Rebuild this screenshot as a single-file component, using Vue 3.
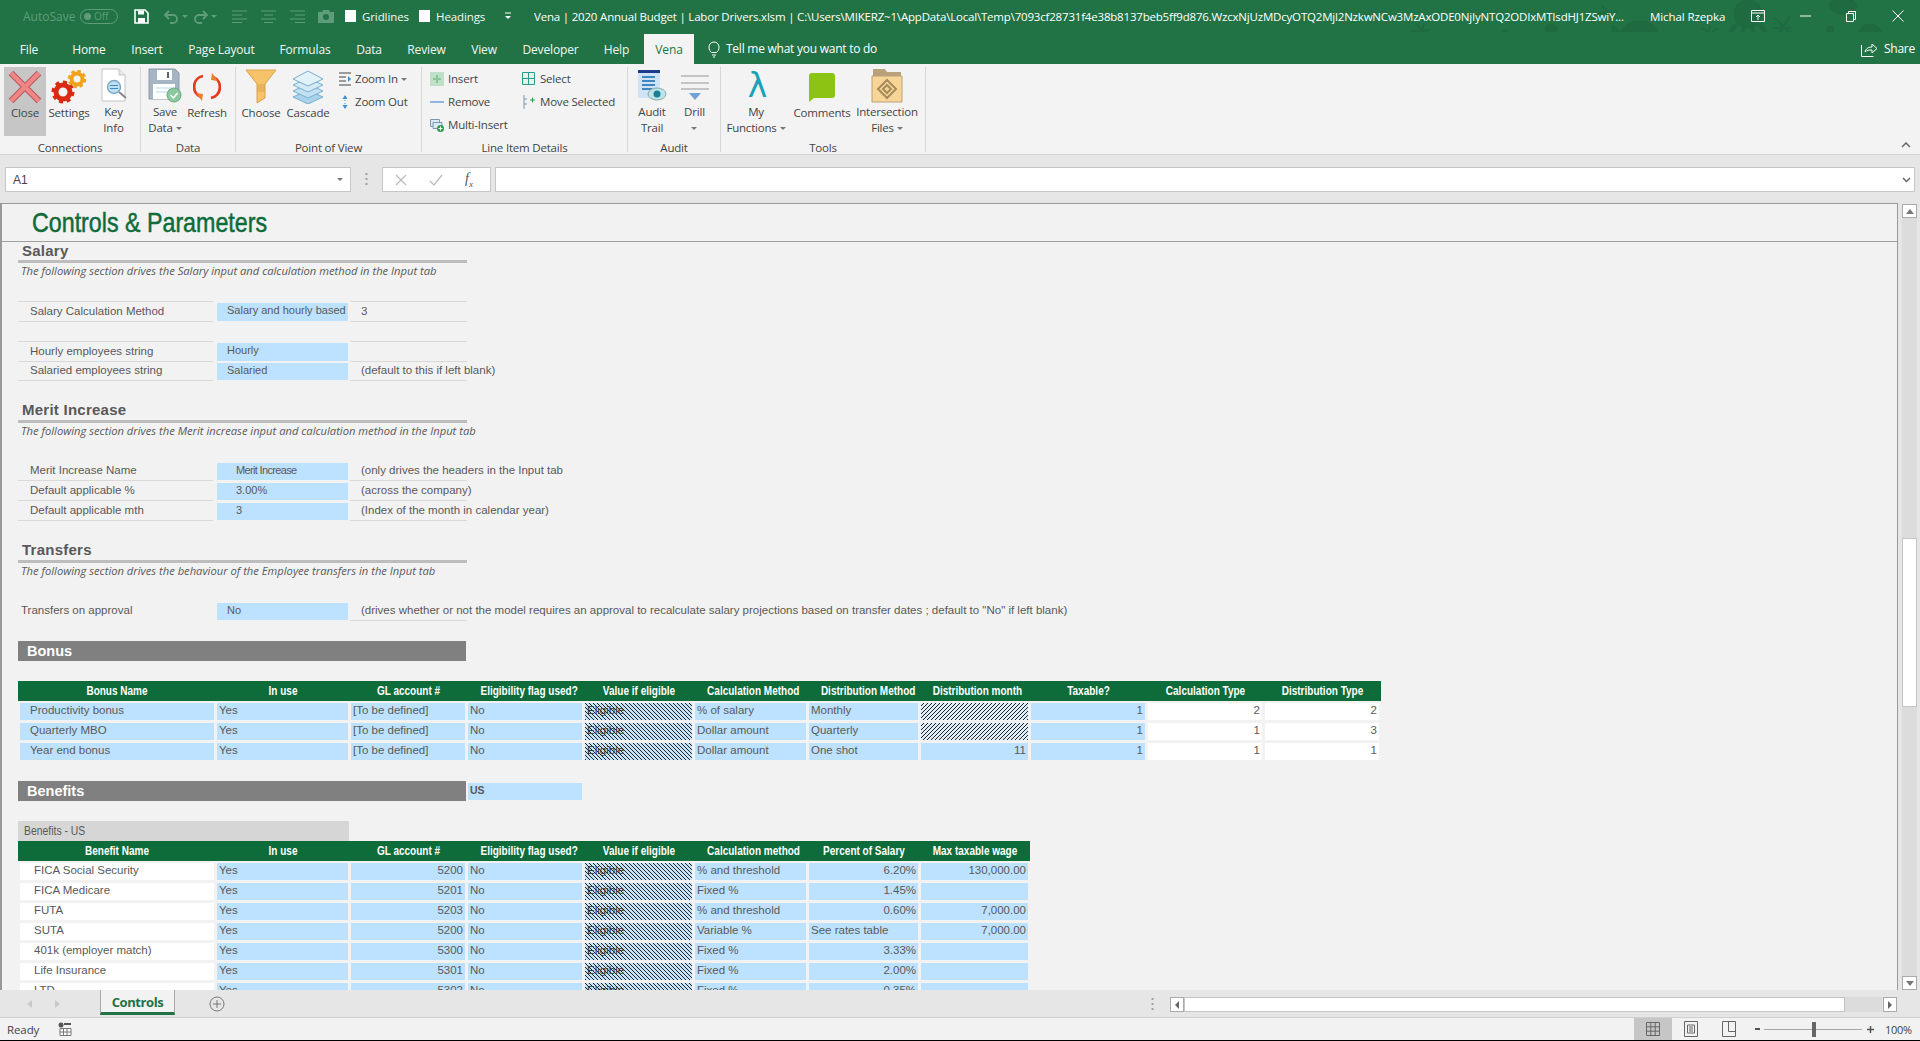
<script setup>
const tabs = [
  { t: 'File', w: 58 }, { t: 'Home', w: 62 }, { t: 'Insert', w: 54 }, { t: 'Page Layout', w: 95 },
  { t: 'Formulas', w: 72 }, { t: 'Data', w: 56 }, { t: 'Review', w: 59 }, { t: 'View', w: 56 },
  { t: 'Developer', w: 77 }, { t: 'Help', w: 55 }
]
const bonus = [
  ['Productivity bonus', 'Yes', '[To be defined]', 'No', 'Eligible', '% of salary', 'Monthly', '', '1', '2', '2'],
  ['Quarterly MBO', 'Yes', '[To be defined]', 'No', 'Eligible', 'Dollar amount', 'Quarterly', '', '1', '1', '3'],
  ['Year end bonus', 'Yes', '[To be defined]', 'No', 'Eligible', 'Dollar amount', 'One shot', '11', '1', '1', '1']
]
const benefits = [
  ['FICA Social Security', '5200', '% and threshold', '6.20%', '130,000.00'],
  ['FICA Medicare', '5201', 'Fixed %', '1.45%', ''],
  ['FUTA', '5203', '% and threshold', '0.60%', '7,000.00'],
  ['SUTA', '5200', 'Variable %', 'See rates table', '7,000.00'],
  ['401k (employer match)', '5300', 'Fixed %', '3.33%', ''],
  ['Life Insurance', '5301', 'Fixed %', '2.00%', ''],
  ['LTD', '5302', 'Fixed %', '0.35%', '']
]
const bonusHead = ['Bonus Name', 'In use', 'GL account #', 'Eligibility flag used?', 'Value if eligible', 'Calculation Method', 'Distribution Method', 'Distribution month', 'Taxable?', 'Calculation Type', 'Distribution Type']
const benefitHead = ['Benefit Name', 'In use', 'GL account #', 'Eligibility flag used?', 'Value if eligible', 'Calculation method', 'Percent of Salary', 'Max taxable wage']
</script>

<template>
  <div class="app">
    <header class="titlebar">
      <svg class="doodles" width="560" height="64" viewBox="0 0 560 64">
        <g fill="#1f6a40" stroke="#1f6a40">
          <ellipse cx="280" cy="32" rx="18" ry="11"/>
          <path d="M262 32l-10-7v14z"/>
          <circle cx="388" cy="14" r="14"/>
          <path d="M376 24l-12 18M384 28l-4 16M392 28l4 16M400 24l12 18" stroke-width="4" fill="none"/>
          <circle cx="191" cy="30" r="6"/>
          <path d="M186 34l-5 10M191 36v8M196 34l5 10" stroke-width="2" fill="none"/>
          <circle cx="510" cy="36" r="12"/>
          <circle cx="470" cy="30" r="4"/>
          <circle cx="145" cy="32" r="3"/>
          <ellipse cx="483" cy="6" rx="14" ry="8"/>
          <path d="M56 24l12 14M64 24l-6 16M50 32l20-2M342 28l18 12M350 26l-3 18M358 28l-16 12M415 18l14 14M430 16l-12 20M412 28l20 0M242 6l12 12M236 14l22-2" stroke-width="2" fill="none"/>
        </g>
      </svg>
      <span class="autosave">AutoSave</span>
      <span class="toggle"><i></i><b>Off</b></span>
      <svg class="ic-save" width="15" height="15" viewBox="0 0 15 15"><path d="M1 1h10l3 3v10H1z" fill="none" stroke="#fff" stroke-width="1.6"/><path d="M4 1.5h6v4H4zM4 9h7v5H4z" fill="#fff"/></svg>
      <svg class="ic-undo" width="17" height="15" viewBox="0 0 17 15"><path d="M3 6h7a4 4 0 0 1 0 8H7M6 2L2 6l4 4" fill="none" stroke="#5f9d7a" stroke-width="1.8"/></svg>
      <span class="mini-caret"></span>
      <svg class="ic-redo" width="17" height="15" viewBox="0 0 17 15"><path d="M14 6H7a4 4 0 0 0 0 8h3M11 2l4 4-4 4" fill="none" stroke="#5f9d7a" stroke-width="1.8"/></svg>
      <span class="mini-caret"></span>
      <svg class="ic-align" width="16" height="13" viewBox="0 0 16 13"><path d="M0 1h15M0 5h10M0 9h15M0 12.500h10" stroke="#5f9d7a"/></svg>
      <svg class="ic-align gap-a" width="16" height="13" viewBox="0 0 16 13"><path d="M0 1h15M3 5h9M0 9h15M3 12.500h9" stroke="#5f9d7a"/></svg>
      <svg class="ic-align gap-a" width="16" height="13" viewBox="0 0 16 13"><path d="M0 1h15M5 5h10M0 9h15M5 12.500h10" stroke="#5f9d7a"/></svg>
      <svg class="ic-cam" width="16" height="14" viewBox="0 0 16 14"><path d="M0 3h4l1-2h6l1 2h4v11H0z" fill="#5f9d7a"/><circle cx="8" cy="8" r="3" fill="#217346"/></svg>
      <span class="check first"></span><span class="tb-text">Gridlines</span>
      <span class="check second"></span><span class="tb-text">Headings</span>
      <span class="qat-more">
        <svg width="8" height="8" viewBox="0 0 8 8"><path d="M1 1h6" stroke="#fff"/><path d="M1 4h6L4 7z" fill="#fff"/></svg>
      </span>
      <span class="doc-title">Vena | 2020 Annual Budget | Labor Drivers.xlsm | C:\Users\MIKERZ~1\AppData\Local\Temp\7093cf28731f4e38b8137beb5ff9d876.WzcxNjUzMDcyOTQ2Mjl2NzkwNCw3MzAxODE0NjIyNTQ2ODIxMTIsdHJ1ZSwiY...</span>
      <span class="user">Michal Rzepka</span>
      <svg class="ic-display" width="14" height="12" viewBox="0 0 14 12"><path d="M.5.500h13v11H.5zM.5 3h13M7 10V5M5 7l2-2 2 2" fill="none" stroke="#fff"/></svg>
      <svg class="ic-min" width="11" height="2" viewBox="0 0 11 2"><path d="M0 1h11" stroke="#fff"/></svg>
      <svg class="ic-restore" width="10" height="11" viewBox="0 0 10 11"><path d="M.5 2.500h7v8h-7zM2.500 2.500v-2h7v8h-2" fill="none" stroke="#fff"/></svg>
      <svg class="ic-close" width="12" height="12" viewBox="0 0 12 12"><path d="M.5.500l11 11M11.500.500l-11 11" stroke="#fff"/></svg>
    </header>

    <nav class="tabbar">
      <span v-for="t in tabs" :key="t.t" class="tab" :style="{ width: t.w + 'px' }">{{ t.t }}</span>
      <span class="tab active">Vena</span>
      <svg class="bulb" width="12" height="17" viewBox="0 0 12 17"><path d="M3.500 11.500C2 10 1 9 1 6a5 5 0 0 1 10 0c0 3-1 4-2.500 5.500zM4 14h4M5 16h2" fill="none" stroke="#fff"/></svg>
      <span class="tellme">Tell me what you want to do</span>
      <svg class="share-ic" width="17" height="15" viewBox="0 0 17 15"><path d="M.5 3v11.500h12M4 10c1-4 4-5 7-5V2l5 4.500L11 11V8c-3 0-5 0-7 2z" fill="none" stroke="#fff"/></svg>
      <span class="share">Share</span>
    </nav>

    <section class="ribbon">
      <div class="group g-conn">
        <div class="items">
          <div class="big w42 on">
            <div class="icon"><svg width="34" height="34" viewBox="0 0 34 34"><path d="M3 3l28 28M31 3L3 31" stroke="#b85b5b" stroke-width="6.500"/><path d="M3 3l28 28M31 3L3 31" stroke="#f08585" stroke-width="4.500"/></svg></div>
            <span>Close</span>
          </div>
          <div class="big w46">
            <div class="icon"><svg width="36" height="34" viewBox="0 0 36 34"><circle cx="12" cy="22" r="7" fill="none" stroke="#d92b12" stroke-width="5"/><circle cx="12" cy="22" r="10" fill="none" stroke="#d92b12" stroke-width="3" stroke-dasharray="4 3.800"/><circle cx="26" cy="9" r="5.500" fill="none" stroke="#f0a21c" stroke-width="4"/><circle cx="26" cy="9" r="8" fill="none" stroke="#f0a21c" stroke-width="2.500" stroke-dasharray="3.500 2.800"/></svg></div>
            <span>Settings</span>
          </div>
          <div class="big w43">
            <div class="icon"><svg width="30" height="36" viewBox="0 0 30 36"><path d="M3 1h17l6 6v26H3z" fill="#fff" stroke="#c4c4c4"/><path d="M20 1v6h6" fill="#eaeaea" stroke="#c4c4c4"/><circle cx="15" cy="19" r="6.500" fill="#bfe0f2" stroke="#78a8c4" stroke-width="1.400"/><path d="M11 17.500h8M11 20.500h8" stroke="#3f87c0"/><path d="M20 24l7 6" stroke="#888" stroke-width="2"/></svg></div>
            <span>Key<br>Info</span>
          </div>
        </div>
        <div class="glabel conn">Connections</div>
      </div>
      <div class="group g-data">
        <div class="items">
          <div class="big w48">
            <div class="icon"><svg width="34" height="36" viewBox="0 0 34 36"><path d="M1 1h26l4 4v26H1z" fill="#a6b5c4" stroke="#8c9bab"/><path d="M9 2h15v10H9z" fill="#fff"/><path d="M19 4h2v6h-2z" fill="#566"/><path d="M5 16h22v15H5z" fill="#fff"/><path d="M8 20h16M8 24h12" stroke="#b7dcee"/><circle cx="26" cy="27" r="7" fill="#8cc9a0" stroke="#6aa87f"/><path d="M22.500 27l3 3 4-5" fill="none" stroke="#fff" stroke-width="1.500"/></svg></div>
            <span>Save<br>Data<i class="caret"></i></span>
          </div>
          <div class="big w36">
            <div class="icon"><svg width="28" height="32" viewBox="0 0 28 32"><path d="M10 5A11 11 0 0 0 8 26" fill="none" stroke="#e5391c" stroke-width="2.800"/><path d="M18 27A11 11 0 0 0 20 6" fill="none" stroke="#e5391c" stroke-width="2.800"/><path d="M3 22l7 1-1 7zM25 10l-7-1 1-7z" fill="#f07d2a"/></svg></div>
            <span>Refresh</span>
          </div>
        </div>
        <div class="glabel">Data</div>
      </div>
      <div class="group g-pov">
        <div class="items">
          <div class="big w50">
            <div class="icon"><svg width="32" height="36" viewBox="0 0 32 36"><path d="M1 1h30L20 15v14l-8 5V15z" fill="#f6c26a" stroke="#d9a349"/><path d="M12 15h8v8h-8z" fill="#d9a349" opacity=".5"/></svg></div>
            <span>Choose</span>
          </div>
          <div class="big w44">
            <div class="icon"><svg width="34" height="34" viewBox="0 0 34 34"><path d="M17 20L2 27l15 7 15-7z" fill="#a9d3ec" stroke="#78afd0"/><path d="M17 14L2 21l15 7 15-7z" fill="#c2e0f2" stroke="#78afd0"/><path d="M17 8L2 15l15 7 15-7z" fill="#d3e9f6" stroke="#78afd0"/><path d="M17 1L2 9l15 7 15-7z" fill="#e3f1f9" stroke="#78afd0"/></svg></div>
            <span>Cascade</span>
          </div>
          <div class="smalls zoom-col">
            <div class="small"><svg width="14" height="14" viewBox="0 0 14 14"><path d="M1 1h12M1 5h7M1 9h7M1 13h12" stroke="#444"/><path d="M10 4l3 3-3 3z" fill="#3b8fd1"/></svg><span>Zoom In<i class="caret"></i></span></div>
            <div class="small"><svg width="14" height="14" viewBox="0 0 14 14"><path d="M7 0L4.500 4h5zM7 14l-2.500-4h5z" fill="#3b8fd1"/><path d="M7 5v1M7 8v1" stroke="#3b8fd1"/></svg><span>Zoom Out</span></div>
          </div>
        </div>
        <div class="glabel">Point of View</div>
      </div>
      <div class="group g-line">
        <div class="items">
          <div class="smalls line-a">
            <div class="small"><svg width="14" height="14" viewBox="0 0 14 14"><path d="M0 0h14v14H0z" fill="#bfe0c8"/><path d="M7 3v8M3 7h8" stroke="#8cc49c" stroke-width="2"/></svg><span>Insert</span></div>
            <div class="small"><svg width="14" height="14" viewBox="0 0 14 14"><path d="M0 7h14" stroke="#8fb5e0" stroke-width="2"/></svg><span>Remove</span></div>
            <div class="small"><svg width="14" height="14" viewBox="0 0 14 14"><path d="M.5 1.500h9v7h-9z" fill="#dbe9f4" stroke="#7a98ad"/><path d="M3 4.500h9v6H3z" fill="#dbe9f4" stroke="#7a98ad"/><circle cx="10.500" cy="10.500" r="3.500" fill="#2c9e4b"/><path d="M8.500 10.500h4M10.500 8.500v4" stroke="#fff"/></svg><span>Multi-Insert</span></div>
          </div>
          <div class="smalls line-b">
            <div class="small"><svg width="14" height="14" viewBox="0 0 14 14"><path d="M.5.500h12v12H.5zM6.500.500v12M.5 6.500h12" fill="#e8f2e8" stroke="#2b9a8f"/></svg><span>Select</span></div>
            <div class="small"><svg width="14" height="14" viewBox="0 0 14 14"><path d="M2 0v14M2 4h3M2 9h3" stroke="#7a98ad"/><path d="M8 5h5M10.500 2.500v5" stroke="#2c9e4b"/></svg><span>Move Selected</span></div>
          </div>
        </div>
        <div class="glabel">Line Item Details</div>
      </div>
      <div class="group g-audit">
        <div class="items">
          <div class="big w48">
            <div class="icon"><svg width="30" height="34" viewBox="0 0 30 34"><path d="M1 1h22v28H1z" fill="#cfe3f7"/><path d="M1 1h22v3H1z" fill="#1c3b8c"/><path d="M5 8h13M5 12h13M5 16h13M5 20h10" stroke="#3f87c0" stroke-width="2"/><ellipse cx="20" cy="25" rx="9" ry="6" fill="#bfe3ea" stroke="#8aa"/><circle cx="20" cy="25" r="3.500" fill="#18808e"/></svg></div>
            <span>Audit<br>Trail</span>
          </div>
          <div class="big w37">
            <div class="icon"><svg width="30" height="32" viewBox="0 0 30 32"><path d="M1 6h28M1 13h28M1 19h28" stroke="#b5b5b5" stroke-width="1.500"/><path d="M9 23h12l-6 7z" fill="#6fa3d8"/></svg></div>
            <span>Drill<br><i class="caret solo"></i></span>
          </div>
        </div>
        <div class="glabel">Audit</div>
      </div>
      <div class="group g-tools">
        <div class="items">
          <div class="big w70">
            <div class="icon lambda">λ</div>
            <span>My<br>Functions<i class="caret"></i></span>
          </div>
          <div class="big w62">
            <div class="icon"><svg width="28" height="32" viewBox="0 0 28 32"><path d="M4 2h20a3 3 0 0 1 3 3v19a3 3 0 0 1-3 3H6l-5 4V5a3 3 0 0 1 3-3z" fill="#8cc413"/></svg></div>
            <span>Comments</span>
          </div>
          <div class="big w68">
            <div class="icon"><svg width="32" height="36" viewBox="0 0 32 36"><path d="M2 1h12l2 3h14v6H2z" fill="#b9a27a"/><path d="M1 8h30v26H1z" fill="#f6d596" stroke="#b9a27a"/><path d="M16 12l9 9-9 9-9-9z" fill="none" stroke="#a68a5c" stroke-width="2"/><path d="M16 17l4 4-4 4-4-4z" fill="none" stroke="#a68a5c" stroke-width="2"/></svg></div>
            <span>Intersection<br>Files<i class="caret"></i></span>
          </div>
        </div>
        <div class="glabel">Tools</div>
      </div>
      <svg class="collapse" width="10" height="6" viewBox="0 0 10 6"><path d="M1 5l4-4 4 4" fill="none" stroke="#666" stroke-width="1.500"/></svg>
    </section>

    <section class="formula">
      <div class="namebox"><span>A1</span><i class="caret"></i></div>
      <svg class="dots" width="3" height="14" viewBox="0 0 3 14"><path d="M1.500 1v2M1.500 6v2M1.500 11v2" stroke="#a0a0a0" stroke-width="2"/></svg>
      <div class="fxbox">
        <svg width="12" height="12" viewBox="0 0 12 12"><path d="M1 1l10 10M11 1L1 11" stroke="#bcbcbc" stroke-width="1.300"/></svg>
        <svg width="14" height="12" viewBox="0 0 14 12"><path d="M1 7l4 4 8-10" fill="none" stroke="#bcbcbc" stroke-width="1.300"/></svg>
        <span class="fx">f<sub>x</sub></span>
      </div>
      <div class="finput"><svg width="9" height="6" viewBox="0 0 9 6"><path d="M1 1l3.500 3.500L8 1" fill="none" stroke="#666" stroke-width="1.500"/></svg></div>
    </section>

    <main class="main">
      <div class="sheet">
        <h1 class="sheet-title"><span>Controls &amp; Parameters</span></h1>

        <div class="shead first">Salary</div>
        <div class="note">The following section drives the Salary input and calculation method in the Input tab</div>
        <div class="blank"></div>
        <div class="param lined-top"><span class="lab">Salary Calculation Method</span><span class="inp">Salary and hourly based</span><span class="aux">3</span></div>
        <div class="blank"></div>
        <div class="param lined-top"><span class="lab">Hourly employees string</span><span class="inp">Hourly</span><span class="aux"></span></div>
        <div class="param"><span class="lab">Salaried employees string</span><span class="inp">Salaried</span><span class="aux">(default to this if left blank)</span></div>
        <div class="blank"></div>

        <div class="shead">Merit Increase</div>
        <div class="note">The following section drives the Merit increase input and calculation method in the Input tab</div>
        <div class="blank"></div>
        <div class="param"><span class="lab">Merit Increase Name</span><span class="inp ind tight">Merit Increase</span><span class="aux">(only drives the headers in the Input tab</span></div>
        <div class="param"><span class="lab">Default applicable %</span><span class="inp ind">3.00%</span><span class="aux">(across the company)</span></div>
        <div class="param"><span class="lab">Default applicable mth</span><span class="inp ind">3</span><span class="aux">(Index of the month in calendar year)</span></div>
        <div class="blank"></div>

        <div class="shead">Transfers</div>
        <div class="note">The following section drives the behaviour of the Employee transfers in the Input tab</div>
        <div class="blank"></div>
        <div class="param plain"><span class="lab">Transfers on approval</span><span class="inp">No</span><span class="aux">(drives whether or not the model requires an approval to recalculate salary projections based on transfer dates ; default to "No" if left blank)</span></div>
        <div class="blank"></div>

        <div class="band-row"><div class="band">Bonus</div></div>
        <div class="blank"></div>

        <div class="tbl-row thead t-bonus"><span v-for="h in bonusHead" :key="h">{{ h }}</span></div>
        <div v-for="r in bonus" :key="r[0]" class="tbl-row t-bonus">
          <span class="c blue nm">{{ r[0] }}</span>
          <span class="c blue">{{ r[1] }}</span>
          <span class="c blue">{{ r[2] }}</span>
          <span class="c blue">{{ r[3] }}</span>
          <span class="c hatch">{{ r[4] }}</span>
          <span class="c blue">{{ r[5] }}</span>
          <span class="c blue">{{ r[6] }}</span>
          <span class="c" :class="r[7] ? 'blue num' : 'hatch2'">{{ r[7] }}</span>
          <span class="c blue num">{{ r[8] }}</span>
          <span class="c white num">{{ r[9] }}</span>
          <span class="c white num">{{ r[10] }}</span>
        </div>
        <div class="blank"></div>

        <div class="band-row">
          <div class="band">Benefits</div>
          <div class="us">US</div>
        </div>
        <div class="blank"></div>

        <div class="band-row"><div class="subband"><span>Benefits - US</span></div></div>
        <div class="tbl-row thead t-ben"><span v-for="h in benefitHead" :key="h">{{ h }}</span></div>
        <div v-for="r in benefits" :key="r[0]" class="tbl-row t-ben">
          <span class="c white nm2">{{ r[0] }}</span>
          <span class="c blue">Yes</span>
          <span class="c blue num">{{ r[1] }}</span>
          <span class="c blue">No</span>
          <span class="c hatch">Eligible</span>
          <span class="c blue">{{ r[2] }}</span>
          <span class="c blue" :class="{ num: r[3].endsWith('%') }">{{ r[3] }}</span>
          <span class="c blue num">{{ r[4] }}</span>
        </div>
      </div>
      <aside class="vscroll">
        <span class="sbtn"><svg width="8" height="5" viewBox="0 0 8 5"><path d="M4 0l4 5H0z" fill="#777"/></svg></span>
        <span class="vtrack"><span class="vthumb"></span></span>
        <span class="sbtn"><svg width="8" height="5" viewBox="0 0 8 5"><path d="M4 5l4-5H0z" fill="#777"/></svg></span>
      </aside>
    </main>

    <section class="sheetbar">
      <svg class="nav-arrow a1" width="5" height="8" viewBox="0 0 5 8"><path d="M5 0L0 4l5 4z" fill="#c9c9c9"/></svg>
      <svg class="nav-arrow a2" width="5" height="8" viewBox="0 0 5 8"><path d="M0 0l5 4-5 4z" fill="#c9c9c9"/></svg>
      <div class="sheet-tab">Controls</div>
      <svg class="plus" width="16" height="16" viewBox="0 0 16 16"><circle cx="8" cy="8" r="7" fill="none" stroke="#777"/><path d="M4 8h8M8 4v8" stroke="#777"/></svg>
      <svg class="hdots" width="3" height="12" viewBox="0 0 3 12"><path d="M1.500 0v2M1.500 5v2M1.500 10v2" stroke="#a0a0a0" stroke-width="2"/></svg>
      <div class="hscroll">
        <span class="hbtn"><svg width="4" height="8" viewBox="0 0 4 8"><path d="M4 0L0 4l4 4z" fill="#666"/></svg></span>
        <span class="hthumb"></span>
        <span class="htrack"></span>
        <span class="hbtn last"><svg width="4" height="8" viewBox="0 0 4 8"><path d="M0 0l4 4-4 4z" fill="#666"/></svg></span>
      </div>
    </section>

    <footer class="status">
      <span class="ready">Ready</span>
      <svg class="macro" width="14" height="14" viewBox="0 0 14 14"><circle cx="3" cy="3" r="2.500" fill="#555"/><path d="M6 1h7v2H6z" fill="#555"/><path d="M2 6.500h11v7H2zM5.500 6.500v7M9 6.500v7M2 10h11" fill="#fff" stroke="#777"/></svg>
      <div class="views">
        <span class="view on"><svg width="14" height="14" viewBox="0 0 14 14"><path d="M.5.500h13v13H.5zM4.800.500v13M9.200.500v13M.5 4.800h13M.5 9.200h13" fill="none" stroke="#666"/></svg></span>
        <span class="view"><svg width="14" height="16" viewBox="0 0 14 16"><path d="M.5.500h13v15H.5z" fill="none" stroke="#666"/><path d="M3.500 4h7v8h-7zM5 6h4M5 8h4M5 10h4" fill="none" stroke="#666"/></svg></span>
        <span class="view"><svg width="14" height="16" viewBox="0 0 14 16"><path d="M.5.500h13v15H.5zM6.500.500v10h7" fill="none" stroke="#666"/></svg></span>
      </div>
      <div class="zoomer">
        <span class="zm"></span>
        <span class="zline"><i></i></span>
        <svg width="7" height="7" viewBox="0 0 7 7"><path d="M0 3.500h7M3.500 0v7" stroke="#555" stroke-width="1.500"/></svg>
      </div>
      <span class="pct">100%</span>
    </footer>
  </div>
</template>

<style>
html, body { margin: 0; padding: 0; overflow: hidden; }
</style>

<style scoped>
* { box-sizing: border-box; }
.app {
  width: 1920px; height: 1041px; display: flex; flex-direction: column;
  background: #f2f2f2; overflow: hidden; border-bottom: 1px solid #000;
  font-family: "Open Sans", "Liberation Sans", sans-serif; position: relative;
}
/* title bar */
.titlebar {
  height: 32px; background: #217346; color: #fff; display: flex; align-items: center;
  font-size: 12px; position: relative; white-space: nowrap; padding-left: 23px;
}
.doodles { position: absolute; left: 1360px; top: 0; }
.titlebar > span, .titlebar > svg:not(.doodles) { position: relative; flex: none; }
.autosave { color: #5f9d7a; width: 57px; }
.toggle {
  width: 38px; height: 15px; border: 1px solid #5f9d7a; border-radius: 8px;
  display: flex; align-items: center; padding-left: 3px; gap: 3px;
}
.toggle i { width: 7px; height: 7px; border-radius: 50%; background: #5f9d7a; }
.toggle b { font-weight: 400; font-size: 10px; color: #5f9d7a; }
.ic-save { margin-left: 16px; }
.ic-undo { margin-left: 14px; }
.mini-caret { width: 0; height: 0; border: 3px solid transparent; border-top-color: #5f9d7a; margin: 3px 0 0 2px; }
.ic-redo { margin-left: 4px; }
.ic-align { margin-left: 15px; }
.ic-align.gap-a { margin-left: 13px; }
.ic-cam { margin-left: 12px; }
.check { width: 11px; height: 12px; background: #fff; }
.check.first { margin-left: 11px; }
.check.second { margin-left: 11px; }
.tb-text { margin-left: 6px; font-size: 11.5px; width: 46px; letter-spacing: -.1px; color: #f4f8f5; }
.tb-text + .check { margin-left: 11px; }
.qat-more { margin-left: 22px; width: 8px; display: flex; }
.doc-title { margin-left: 22px; width: 1097px; overflow: hidden; font-size: 11.5px; letter-spacing: -.19px; }
.user { margin-left: 19px; width: 78px; font-size: 11.5px; letter-spacing: -.1px; }
.ic-display { margin-left: 23px; }
.ic-min { margin-left: 35px; }
.ic-restore { margin-left: 35px; }
.ic-close { margin-left: 36px; }
/* tabs */
.tabbar {
  height: 32px; background: #217346; color: #fff; display: flex; align-items: flex-end;
  font-size: 12px; position: relative; white-space: nowrap;
}
.tab { height: 30px; display: flex; align-items: center; justify-content: center; letter-spacing: -.15px; color: #f1f6f3; }
.tab.active { width: 50px; background: #f3f3f3; color: #217346; }
.bulb { margin: 0 0 6px 14px; }
.tellme { margin: 0 0 6px 6px; width: 151px; letter-spacing: -.25px; height: 18px; line-height: 18px; }
.share-ic { margin: 0 0 7px 984px; }
.share { margin: 0 0 6px 6px; height: 18px; line-height: 18px; letter-spacing: -.25px; }
/* ribbon */
.ribbon {
  height: 91px; background: #f3f3f3; display: flex; padding: 3px 0 0 4px;
  border-bottom: 1px solid #d4d4d4; font-size: 11.500px; color: #444; letter-spacing: -.2px;
}
.group { height: 85px; border-right: 1px solid #d6d6d6; display: flex; flex-direction: column; flex: none; }
.g-conn { width: 137px; }
.g-data { width: 95px; }
.g-pov { width: 186px; }
.g-line { width: 206px; }
.g-audit { width: 93px; }
.g-tools { width: 205px; }
.items { height: 73px; display: flex; align-items: flex-start; }
.glabel { height: 12px; line-height: 16px; text-align: center; font-size: 11.500px; }
.glabel.conn { padding-right: 4px; }
.big { display: flex; flex-direction: column; align-items: center; text-align: center; line-height: 16px; flex: none; height: 69px; }
.big.on { background: #c6c6c6; }
.icon { height: 38px; display: flex; align-items: center; justify-content: center; padding-top: 1px; }
.w36 { width: 36px; } .w37 { width: 37px; } .w42 { width: 42px; } .w43 { width: 43px; } .w44 { width: 44px; }
.w46 { width: 46px; } .w48 { width: 48px; } .w50 { width: 50px; } .w62 { width: 62px; } .w68 { width: 68px; } .w70 { width: 70px; }
.lambda { font-family: "DejaVu Sans", sans-serif; font-size: 33px; color: #17a2b5; font-weight: 400; padding-left: 3px; }
.caret {
  display: inline-block; width: 0; height: 0; border: 3px solid transparent;
  border-top-color: #777; border-bottom: 0; margin-left: 3px; vertical-align: 2px;
}
.caret.solo { margin-left: 0; }
.smalls { display: flex; flex-direction: column; }
.small { height: 23px; display: flex; align-items: center; gap: 4px; white-space: nowrap; }
.zoom-col { margin-left: 8px; }
.zoom-col .small { gap: 3px; }
.line-a { margin-left: 8px; width: 92px; }
.line-b { width: 100px; }
.collapse { margin: 75px 0 0 975px; flex: none; }
/* formula */
.formula { height: 48px; background: #e6e6e6; display: flex; align-items: flex-start; padding: 12px 0 0 5px; }
.namebox {
  width: 346px; height: 25px; background: #fff; border: 1px solid #c6c6c6; display: flex;
  align-items: center; justify-content: space-between; padding: 0 7px; font-size: 12px; color: #444;
  font-family: "Liberation Sans", sans-serif;
}
.dots { margin: 5px 0 0 14px; }
.fxbox {
  width: 109px; height: 25px; margin-left: 14px; background: #fff; border: 1px solid #c6c6c6;
  display: flex; align-items: center; padding-left: 12px; gap: 22px;
}
.fx { font-family: "Liberation Serif", serif; font-style: italic; font-size: 14px; color: #555; }
.fx sub { font-size: 9px; }
.finput {
  width: 1420px; height: 25px; margin-left: 4px; background: #fff; border: 1px solid #c6c6c6;
  display: flex; align-items: center; justify-content: flex-end; padding-right: 3px;
}
/* sheet */
.main { height: 787px; display: flex; background: #e6e6e6; }
.sheet {
  width: 1898px; height: 787px; background: #f2f2f2; border-top: 1px solid #999; border-right: 1px solid #999;
  border-left: 2px solid #999; overflow: hidden; color: #595959;
  font-family: "Liberation Sans", Arial, sans-serif; font-size: 11.500px; line-height: 1;
}
.sheet > * { margin-left: 16px; }
.sheet-title {
  margin: 0 -2px 0 -2px; height: 38px; padding-left: 30px; border-bottom: 1px solid #a0a0a0;
  border-left: 2px solid #217346; width: 1898px;
  font: 400 28px/37px "Liberation Sans", sans-serif; color: #0e6b3a;
}
.sheet-title span {
  display: inline-block; transform: scaleX(.83); transform-origin: left center;
  -webkit-text-stroke: .5px #0e6b3a; white-space: nowrap;
}
.shead {
  width: 449px; height: 22px; margin-bottom: -2px; border-bottom: 3px solid #bdbdbd;
  padding: 0 0 0 4px; font-weight: 700; font-size: 15px; line-height: 17px; position: relative; letter-spacing: .25px;
}
.shead.first { height: 21px; padding-top: 0; }
.note {
  height: 20px; line-height: 20px; padding-left: 3px; white-space: nowrap;
  font-family: "Open Sans", sans-serif; font-style: italic; font-size: 11.200px;
}
.blank { height: 20px; }
.param { height: 20px; display: grid; grid-template-columns: 198px 134px 117px; white-space: nowrap; }
.param span { line-height: 19px; }
.lab { border-bottom: 1px solid #d9d9d9; margin-right: 3px; padding-left: 12px; }
.inp { background: #bde2ff; margin: 2px 2px 1px 1px; padding-left: 10px; line-height: 15px !important; font-size: 11px; }
.inp.ind { padding-left: 19px; }
.inp.tight { letter-spacing: -.65px; }
.aux { border-bottom: 1px solid #d9d9d9; padding-left: 11px; }
.lined-top .lab, .lined-top .aux { border-top: 1px solid #d9d9d9; }
.plain .lab { border: 0; padding-left: 3px; }
.band-row { height: 20px; display: flex; }
.band {
  width: 448px; background: #808080; color: #fff; font-weight: 700; font-size: 14.500px;
  line-height: 20px; padding-left: 9px;
}
.us {
  width: 114px; margin: 2px 0 1px 2px; background: #bde2ff; padding-left: 2px;
  font-weight: 700; line-height: 15px; font-size: 10.500px;
}
.subband {
  width: 331px; background: #d6d6d6; padding-left: 6px; line-height: 20px; font-size: 13px;
}
.subband span { display: inline-block; transform: scaleX(.8); transform-origin: left center; white-space: nowrap; }
.tbl-row { height: 20px; display: grid; white-space: nowrap; }
.t-bonus { grid-template-columns: 198px 134px 117px 117px 110px 114px 112px 110px 117px 117px 117px; }
.t-ben { grid-template-columns: 198px 134px 117px 117px 110px 114px 112px 110px; }
.thead { background: #0e6b3a; color: #fff; font: 700 13px/19px "Liberation Sans", sans-serif; text-align: center; }
.thead span { transform: scaleX(.77); }
.t-bonus.thead { width: 1363px; }
.t-ben.thead { width: 1012px; }
.c { margin: 2px 2px 1px 1px; padding: 0 2px; line-height: 15px; overflow: hidden; }
.c:first-child { margin-left: 2px; }
.blue { background: #bde2ff; }
.white { background: #fff; }
.num { text-align: right; }
.nm { padding-left: 10px; }
.nm2 { padding-left: 14px; }
.hatch { background: repeating-linear-gradient(45deg, #222 0 1.200px, #c4e2fa 1.200px 2.830px); color: #333; }
.hatch2 { background: repeating-linear-gradient(-45deg, #222 0 1.200px, #dcecf8 1.200px 2.830px); }
.vscroll { width: 22px; padding: 1px 3px 0 4px; display: flex; flex-direction: column; }
.sbtn { height: 14px; background: #fff; border: 1px solid #aaa; display: flex; align-items: center; justify-content: center; flex: none; }
.vtrack { flex: 1; background: #dcdcdc; padding-top: 320px; }
.vthumb { display: block; width: 15px; height: 169px; background: #fff; border: 1px solid #c4c4c4; }
/* sheet bar */
.sheetbar { height: 28px; background: #e6e6e6; border-top: 0; border-bottom: 1px solid #cfcfcf; display: flex; align-items: flex-start; }
.nav-arrow { margin-top: 10px; flex: none; }
.a1 { margin-left: 27px; }
.a2 { margin-left: 23px; }
.sheet-tab {
  width: 75px; height: 25px; margin-left: 40px; background: #f2f2f2; border: 1px solid #a8a8a8; border-top: 0;
  border-bottom: 3px solid #217346; color: #217346; font: 700 13px/24px "Open Sans", sans-serif;
  text-align: center; letter-spacing: -.4px; flex: none;
}
.plus { margin: 6px 0 0 34px; flex: none; }
.hdots { margin: 8px 0 0 926px; flex: none; }
.hscroll { display: flex; margin: 7px 0 0 16px; height: 15px; width: 727px; flex: none; }
.hbtn { width: 14px; background: #fff; border: 1px solid #aaa; display: flex; align-items: center; justify-content: center; flex: none; }
.hthumb { width: 661px; background: #fff; border: 1px solid #c4c4c4; }
.htrack { width: 37px; background: #dcdcdc; }
.hbtn.last { margin-left: 1px; }
/* status */
.status { height: 22px; background: #f2f2f2; display: flex; align-items: center; font-size: 11.500px; color: #444; padding-left: 7px; }
.ready { width: 51px; letter-spacing: -.1px; }
.macro { flex: none; }
.views { display: flex; margin-left: 1562px; height: 22px; }
.view { width: 38px; display: flex; align-items: center; justify-content: center; }
.view.on { background: #c6c6c6; }
.zoomer { display: flex; align-items: center; margin-left: 7px; gap: 2px; }
.zm { width: 5px; height: 2px; background: #555; }
.zline { width: 98px; height: 1px; background: #a6a6a6; margin: 0 3px 0 2px; position: relative; }
.zline i { position: absolute; left: 48px; top: -7px; width: 4px; height: 15px; background: #666; }
.pct { margin-left: 11px; font-size: 11px; letter-spacing: -.3px; }
</style>
